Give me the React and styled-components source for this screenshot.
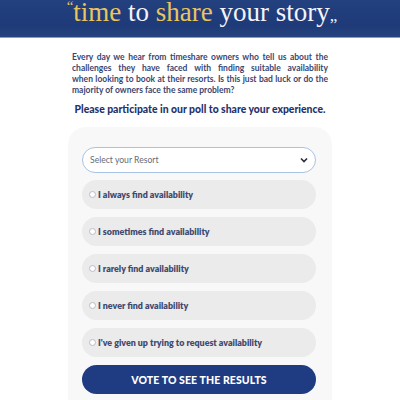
import React from 'react';
import styled, { createGlobalStyle } from 'styled-components';

const Global = createGlobalStyle`
  body {
    margin: 0;
    background: #ffffff;
    font-family: 'Lato', 'Open Sans', sans-serif;
  }
`;

const Page = styled.div`
  width: 400px;
  height: 400px;
  overflow: hidden;
  display: flex;
  flex-direction: column;
  align-items: center;
`;

const Banner = styled.header`
  width: 100%;
  height: 37px;
  background: linear-gradient(180deg, #23407f 0%, #1e3a78 70%, #27447f 100%);
  border-bottom: 1px solid #8c9cc0;
  display: flex;
  justify-content: center;
  align-items: flex-end;
  overflow: hidden;
`;

const Title = styled.h1`
  margin: 0 0 11px 4px;
  font-family: 'Liberation Serif', 'DejaVu Serif', serif;
  font-weight: 400;
  font-size: 27px;
  line-height: 1;
  color: #f4f4f8;
  white-space: nowrap;
`;

const Gold = styled.span`
  color: #e9c55b;
`;

const Quote = styled.span`
  font-size: ${(p) => p.$size}px;
  vertical-align: ${(p) => p.$align};
  color: ${(p) => p.$color};
`;

const Intro = styled.p`
  margin: 14px 0 0;
  width: 256px;
  font-size: 8.5px;
  line-height: 11px;
  font-weight: 700;
  color: #3b4670;
`;

/* each line is spread edge to edge, the final one sits flush left */
const Line = styled.span`
  display: block;
  white-space: nowrap;
  text-align: ${(p) => (p.$last ? 'left' : 'justify')};
  text-align-last: ${(p) => (p.$last ? 'left' : 'justify')};
`;

const Lead = styled.h2`
  margin: 7px 0 0;
  font-size: 10.4px;
  font-weight: 900;
  color: #25326a;
  white-space: nowrap;
`;

const Panel = styled.section`
  margin-top: 12px;
  width: 264px;
  flex: 1;
  background: #f8f8f8;
  border-radius: 18px 18px 0 0;
  padding: 20px 16px 0 14px;
  box-sizing: border-box;
  display: flex;
  flex-direction: column;
  gap: 8px;
`;

const Select = styled.div`
  height: 26px;
  box-sizing: border-box;
  border: 1.5px solid #a9c3e4;
  border-radius: 14px;
  background: #ffffff;
  display: flex;
  align-items: center;
  justify-content: space-between;
  padding: 0 7px 0 7px;
  font-size: 8.6px;
  color: #666b78;
  margin-bottom: -1px;
`;

const Option = styled.label`
  height: 29px;
  border-radius: 15px;
  background: #ebebeb;
  display: flex;
  align-items: center;
  gap: 2px;
  padding-left: 7px;
  font-size: 8.9px;
  font-weight: 800;
  color: #3f4a70;
`;

const Radio = styled.span`
  width: 5px;
  height: 5px;
  border: 1px solid #b9bcc4;
  border-radius: 50%;
  background: #fff;
`;

const Vote = styled.button`
  margin-top: 0;
  height: 29px;
  border: none;
  border-radius: 15px;
  background: #1f3c82;
  color: #ffffff;
  font-family: 'Lato', sans-serif;
  font-size: 10.5px;
  font-weight: 900;
  letter-spacing: 0.1px;
`;

const intro = [
  'Every day we hear from timeshare owners who tell us about the',
  'challenges they have faced with finding suitable availability',
  'when looking to book at their resorts. Is this just bad luck or do the',
  'majority of owners face the same problem?',
];

const answers = [
  'I always find availability',
  'I sometimes find availability',
  'I rarely find availability',
  'I never find availability',
  "I've given up trying to request availability",
];

export default function App() {
  return (
    <Page>
      <Global />
      <Banner>
        <Title>
          <Quote $size={15} $align="top" $color="#e9c55b">&ldquo;</Quote>
          <Gold>time</Gold> to <Gold>share</Gold> your story
          <Quote $size={17} $align="baseline" $color="#f4f4f8">&bdquo;</Quote>
        </Title>
      </Banner>
      <Intro>
        {intro.map((l, i) => (
          <Line key={i} $last={i === intro.length - 1}>
            {l}
          </Line>
        ))}
      </Intro>
      <Lead>Please participate in our poll to share your experience.</Lead>
      <Panel>
        <Select>
          <span>Select your Resort</span>
          <svg width="8" height="6" viewBox="0 0 8 6">
            <path d="M1 1.5 L4 4.5 L7 1.5" fill="none" stroke="#2a2f3a" strokeWidth="1.6" />
          </svg>
        </Select>
        {answers.map((a) => (
          <Option key={a}>
            <Radio />
            {a}
          </Option>
        ))}
        <Vote>VOTE TO SEE THE RESULTS</Vote>
      </Panel>
    </Page>
  );
}
